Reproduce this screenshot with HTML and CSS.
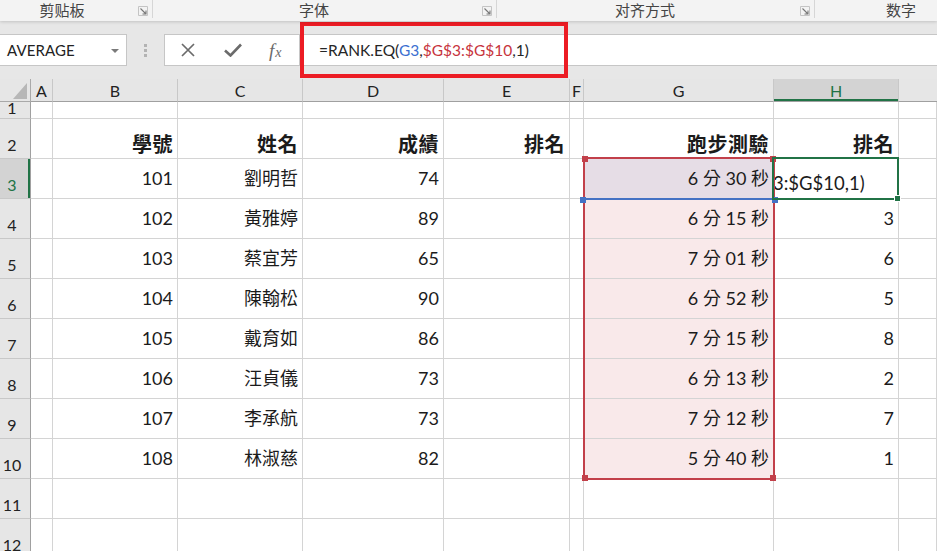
FILE: index.html
```html
<!DOCTYPE html>
<html lang="zh-Hant">
<head>
<meta charset="utf-8">
<title>RANK.EQ</title>
<link rel="stylesheet" href="styles.css">
</head>
<body>
<div class="app">
  <div class="ribbon">
    <div class="grp grp1"><span class="glabel">剪贴板</span><span class="launch"><svg width="10" height="10" viewBox="0 0 10 10"><path d="M0.5 9.5V0.5H9.5V9.5H0.5" fill="none" stroke="#c4c4c4"/><path d="M2.5 2.5L8 8M8 4.5V8H4.5" fill="none" stroke="#777" stroke-width="1.1"/></svg></span></div>
    <div class="sep"></div>
    <div class="grp grp2"><span class="glabel">字体</span><span class="launch"><svg width="10" height="10" viewBox="0 0 10 10"><path d="M0.5 9.5V0.5H9.5V9.5H0.5" fill="none" stroke="#c4c4c4"/><path d="M2.5 2.5L8 8M8 4.5V8H4.5" fill="none" stroke="#777" stroke-width="1.1"/></svg></span></div>
    <div class="sep"></div>
    <div class="grp grp3"><span class="glabel">对齐方式</span><span class="launch"><svg width="10" height="10" viewBox="0 0 10 10"><path d="M0.5 9.5V0.5H9.5V9.5H0.5" fill="none" stroke="#c4c4c4"/><path d="M2.5 2.5L8 8M8 4.5V8H4.5" fill="none" stroke="#777" stroke-width="1.1"/></svg></span></div>
    <div class="sep"></div>
    <div class="grp grp4"><span class="glabel">数字</span></div>
  </div>

  <div class="fbar">
    <div class="namebox"><span class="nbtext">AVERAGE</span><svg class="nbarrow" width="8" height="4" viewBox="0 0 8 4"><path d="M0 0H8L4 4Z" fill="#7a7a7a"/></svg></div>
    <div class="dots"><i></i><i></i><i></i></div>
    <div class="fxbox">
      <svg class="ico" width="14" height="14" viewBox="0 0 14 14"><path d="M1 1L13 13M13 1L1 13" stroke="#6b6b6b" stroke-width="1.7" fill="none"/></svg>
      <svg class="ico" width="18" height="14" viewBox="0 0 18 14"><path d="M1 7.5L6.5 12.5L17 1.5" stroke="#6b6b6b" stroke-width="2.6" fill="none"/></svg>
      <span class="fx"><i>f</i><i class="fxx">x</i></span>
    </div>
    <div class="formula"><span class="fk">=RANK.EQ(</span><span class="fb">G3</span><span class="fk">,</span><span class="fr">$G$3:$G$10</span><span class="fk">,1)</span></div>
    <div class="annot"></div>
  </div>

  <div class="sheetwrap">
  <div class="sheet">
    <div class="corner"></div>
    <div class="ch">A</div><div class="ch">B</div><div class="ch">C</div><div class="ch">D</div><div class="ch">E</div><div class="ch">F</div><div class="ch">G</div><div class="ch sel">H</div><div class="ch last"></div>

    <div class="rh short">1</div>
    <div class="c"></div><div class="c"></div><div class="c"></div><div class="c"></div><div class="c"></div><div class="c"></div><div class="c"></div><div class="c"></div><div class="c"></div>

    <div class="rh">2</div>
    <div class="c"></div><div class="c hd">學號</div><div class="c hd">姓名</div><div class="c hd">成績</div><div class="c hd">排名</div><div class="c"></div><div class="c hd">跑步測驗</div><div class="c hd">排名</div><div class="c"></div>

    <div class="rh sel">3</div>
    <div class="c"></div><div class="c">101</div><div class="c">劉明哲</div><div class="c">74</div><div class="c"></div><div class="c"></div><div class="c cell-g3">6 分 30 秒</div><div class="c edit"><span>3:$G$10,1)</span></div><div class="c"></div>

    <div class="rh">4</div>
    <div class="c"></div><div class="c">102</div><div class="c">黃雅婷</div><div class="c">89</div><div class="c"></div><div class="c"></div><div class="c rg">6 分 15 秒</div><div class="c">3</div><div class="c"></div>

    <div class="rh">5</div>
    <div class="c"></div><div class="c">103</div><div class="c">蔡宜芳</div><div class="c">65</div><div class="c"></div><div class="c"></div><div class="c rg">7 分 01 秒</div><div class="c">6</div><div class="c"></div>

    <div class="rh">6</div>
    <div class="c"></div><div class="c">104</div><div class="c">陳翰松</div><div class="c">90</div><div class="c"></div><div class="c"></div><div class="c rg">6 分 52 秒</div><div class="c">5</div><div class="c"></div>

    <div class="rh">7</div>
    <div class="c"></div><div class="c">105</div><div class="c">戴育如</div><div class="c">86</div><div class="c"></div><div class="c"></div><div class="c rg">7 分 15 秒</div><div class="c">8</div><div class="c"></div>

    <div class="rh">8</div>
    <div class="c"></div><div class="c">106</div><div class="c">汪貞儀</div><div class="c">73</div><div class="c"></div><div class="c"></div><div class="c rg">6 分 13 秒</div><div class="c">2</div><div class="c"></div>

    <div class="rh">9</div>
    <div class="c"></div><div class="c">107</div><div class="c">李承航</div><div class="c">73</div><div class="c"></div><div class="c"></div><div class="c rg">7 分 12 秒</div><div class="c">7</div><div class="c"></div>

    <div class="rh">10</div>
    <div class="c"></div><div class="c">108</div><div class="c">林淑慈</div><div class="c">82</div><div class="c"></div><div class="c"></div><div class="c rg">5 分 40 秒</div><div class="c">1</div><div class="c"></div>

    <div class="rh">11</div>
    <div class="c"></div><div class="c"></div><div class="c"></div><div class="c"></div><div class="c"></div><div class="c"></div><div class="c"></div><div class="c"></div><div class="c"></div>

    <div class="rh">12</div>
    <div class="c"></div><div class="c"></div><div class="c"></div><div class="c"></div><div class="c"></div><div class="c"></div><div class="c"></div><div class="c"></div><div class="c"></div>
  </div>

  <div class="sheet overlay">
    <div class="ref-blue"></div>
    <div class="ref-red"><i class="h htl"></i><i class="h htr"></i><i class="h hbl"></i><i class="h hbr"></i></div>
    <div class="ref-blue-h"><i class="h hbl"></i><i class="h hbr"></i></div>
    <div class="active"><i class="fill"></i></div>
  </div>
  </div>
</div>
</body>
</html>
```

FILE: styles.css
```css
html, body {
  margin: 0;
  padding: 0;
  background: #ffffff;
  overflow: hidden;
}
.app {
  width: 937px;
  height: 551px;
  overflow: hidden;
  position: relative;
  font-family: "Lato", "Noto Sans CJK TC", sans-serif;
  color: #1b1b1b;
}

/* ribbon group labels */
.ribbon {
  height: 21px;
  background: #f3f3f3;
  display: flex;
  align-items: stretch;
  position: relative;
  z-index: 2;
  box-shadow: 0 1px 3px rgba(0, 0, 0, 0.16);
}
.grp {
  display: flex;
  flex: none;
  align-items: flex-start;
}
.grp1 { width: 159px; margin-left: -7px; }
.grp2 { width: 343px; }
.grp3 { width: 317px; }
.grp4 { width: 172px; }
.glabel {
  flex: 1;
  text-align: center;
  font-family: "Noto Sans CJK SC", sans-serif;
  font-size: 15px;
  line-height: 20px;
  color: #444444;
}
.launch {
  width: 21px;
  display: flex;
  justify-content: flex-end;
  padding-right: 4px;
  box-sizing: border-box;
  padding-top: 6px;
}
.sep {
  width: 1px;
  flex: none;
  background: #d6d6d6;
  margin: 0 0 3px;
}

/* formula bar */
.fbar {
  height: 58px;
  background: #e7e7e7;
  display: flex;
  align-items: flex-start;
  padding-top: 13px;
  box-sizing: border-box;
  position: relative;
}
.namebox {
  width: 127px;
  height: 32px;
  background: #fff;
  border: 1px solid #c6c6c6;
  border-left: none;
  box-sizing: border-box;
  display: flex;
  align-items: center;
  justify-content: space-between;
  padding: 0 7px 0 7px;
}
.nbtext {
  font-size: 15px;
  color: #222;
  letter-spacing: 0.1px;
}
.nbarrow { margin-top: 1px; }
.dots {
  width: 37px;
  height: 32px;
  display: flex;
  flex-direction: column;
  align-items: center;
  justify-content: center;
  gap: 2px;
}
.dots i {
  width: 3px;
  height: 3px;
  background: #b3b3b3;
  display: block;
}
.fxbox {
  width: 136px;
  height: 32px;
  background: #fff;
  border: 1px solid #c6c6c6;
  box-sizing: border-box;
  display: flex;
  align-items: center;
  padding-left: 16px;
}
.fxbox .ico:first-child { margin-right: 29px; }
.fxbox .ico:nth-child(2) { margin-right: 27px; }
.fx {
  font-family: "Liberation Serif", serif;
  font-style: italic;
  color: #6b6b6b;
  font-size: 19px;
  line-height: 1;
}
.fx i { font-style: italic; }
.fxx { font-size: 14px; margin-left: 1px; }
.formula {
  flex: 1;
  height: 32px;
  background: #fff;
  border: 1px solid #c6c6c6;
  border-left: none;
  border-right: none;
  box-sizing: border-box;
  font-size: 15.5px;
  line-height: 30px;
  padding-left: 19px;
  white-space: nowrap;
}
.fk { color: #262626; }
.fb { color: #3b6fd1; }
.fr { color: #c7343c; }
.annot {
  position: absolute;
  left: 300px;
  top: 1px;
  width: 268px;
  height: 56px;
  border: 4px solid #ec1c24;
  box-sizing: border-box;
}

/* sheet grid */
.sheetwrap {
  position: relative;
}
.sheet {
  display: grid;
  grid-template-columns: 31px 22px 125px 125px 141px 126px 14px 190px 125px 1fr;
  grid-template-rows: 23px 17px repeat(11, 40px);
}
.overlay {
  position: absolute;
  left: 0;
  top: 0;
  right: 0;
  bottom: 0;
  pointer-events: none;
}
.corner {
  background: #e6e6e6;
  border-right: 1px solid #a9a9a9;
  border-bottom: 1px solid #a9a9a9;
  position: relative;
}
.corner::after {
  content: "";
  position: absolute;
  right: 3px;
  bottom: 2px;
  width: 14px;
  height: 16px;
  background: #b7b7b7;
  clip-path: polygon(100% 0, 100% 100%, 0 100%);
}
.ch {
  background: #e6e6e6;
  border-right: 1px solid #c8c8c8;
  border-bottom: 1px solid #a0a0a0;
  text-align: center;
  font-size: 16px;
  line-height: 21px;
  padding-top: 1px;
  color: #222;
}
.ch.sel {
  background: #d3d3d3;
  color: #217346;
  box-shadow: inset 0 -2px 0 #217346;
}
.ch.last { border-right: none; }
.rh {
  background: #e6e6e6;
  border-right: 1px solid #a0a0a0;
  border-bottom: 1px solid #c8c8c8;
  font-size: 16px;
  line-height: 18px;
  display: flex;
  align-items: flex-end;
  justify-content: center;
  padding-right: 6px;
  padding-bottom: 4px;
  color: #222;
  overflow: hidden;
}
.rh.short { padding-bottom: 1px; }
.rh.sel {
  background: #d3d3d3;
  color: #217346;
  box-shadow: inset -2px 0 0 #217346;
}
.c {
  border-right: 1px solid #d4d4d4;
  border-bottom: 1px solid #d4d4d4;
  font-size: 18px;
  line-height: 20px;
  display: flex;
  align-items: flex-end;
  justify-content: flex-end;
  padding-right: 4px;
  padding-bottom: 10px;
  white-space: nowrap;
  overflow: hidden;
  min-width: 0;
}
.c.hd {
  font-weight: 700;
  font-size: 20px;
  line-height: 22px;
  padding-bottom: 3px;
  letter-spacing: 0.5px;
}
.c.rg { background: #f9e9ea; }
.c.cell-g3 { background: #e6dde6; }
.c.edit {
  justify-content: flex-start;
  padding-right: 0;
  padding-bottom: 5px;
}
.c.edit span { margin-left: -1px; font-size: 18.5px; }

/* reference range highlights */
.ref-red, .ref-blue, .ref-blue-h, .active {
  box-sizing: border-box;
  position: relative;
}
.ref-blue {
  grid-column: 8;
  grid-row: 4;
  margin: -2px -1px -1px -1px;
  border: 2px solid #4472c4;
}
.ref-red {
  grid-column: 8;
  grid-row: 4 / 12;
  margin: -2px -1px -1px -1px;
  border: 2px solid #c2404a;
}
.ref-blue-h {
  grid-column: 8;
  grid-row: 4;
  margin: -2px -1px -1px -1px;
}
.h {
  position: absolute;
  width: 6px;
  height: 6px;
  background: #c2404a;
  display: block;
}
.ref-red .htl { left: -3px; top: -3px; }
.ref-red .htr { right: -3px; top: -3px; }
.ref-red .hbl { left: -3px; bottom: -3px; }
.ref-red .hbr { right: -3px; bottom: -3px; }
.ref-blue-h .h { background: #4472c4; }
.ref-blue-h .hbl { left: -3px; bottom: -3px; }
.ref-blue-h .hbr { right: -3px; bottom: -3px; }
.active {
  grid-column: 9;
  grid-row: 4;
  margin: -2px 0 -1px -2px;
  border: 2px solid #217346;
}
.active .fill {
  position: absolute;
  right: -4px;
  bottom: -4px;
  width: 5px;
  height: 5px;
  background: #217346;
  border: 1px solid #fff;
  display: block;
}
```
